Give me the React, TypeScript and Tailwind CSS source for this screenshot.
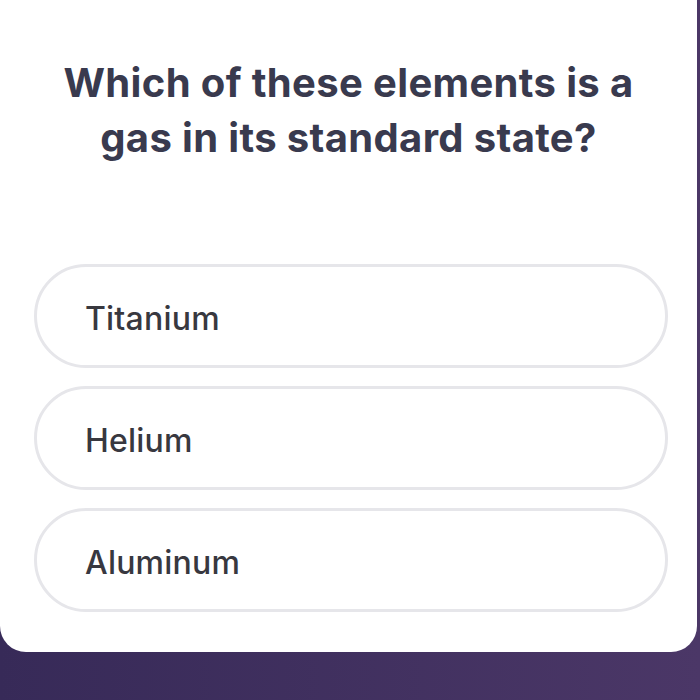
import React from 'react';

const options = ['Titanium', 'Helium', 'Aluminum'];

const App = () => {
  return (
    <div className="h-[700px] w-[700px] overflow-hidden bg-gradient-to-r from-[#372a58] to-[#4b3767] font-['Inter',sans-serif]">
      <div className="mr-[3px] h-[652px] rounded-b-[26px] bg-white pt-[55px]">
        <h1 className="mx-auto w-[630px] text-center text-[40px] font-bold leading-[55px] tracking-[0.35px] text-[#393a4e]">
          Which of these elements is a gas in its standard state?
        </h1>
        <div className="mt-[99px] flex flex-col gap-[18px] pl-[34px] pr-[29px]">
          {options.map((opt) => (
            <button
              key={opt}
              className="flex h-[104px] items-center rounded-full border-[3px] border-[#e6e6ea] bg-white pl-[48px] pt-[5px] text-left text-[32px] font-medium tracking-[0.2px] text-[#38383f]"
            >
              {opt}
            </button>
          ))}
        </div>
      </div>
    </div>
  );
};

export default App;
